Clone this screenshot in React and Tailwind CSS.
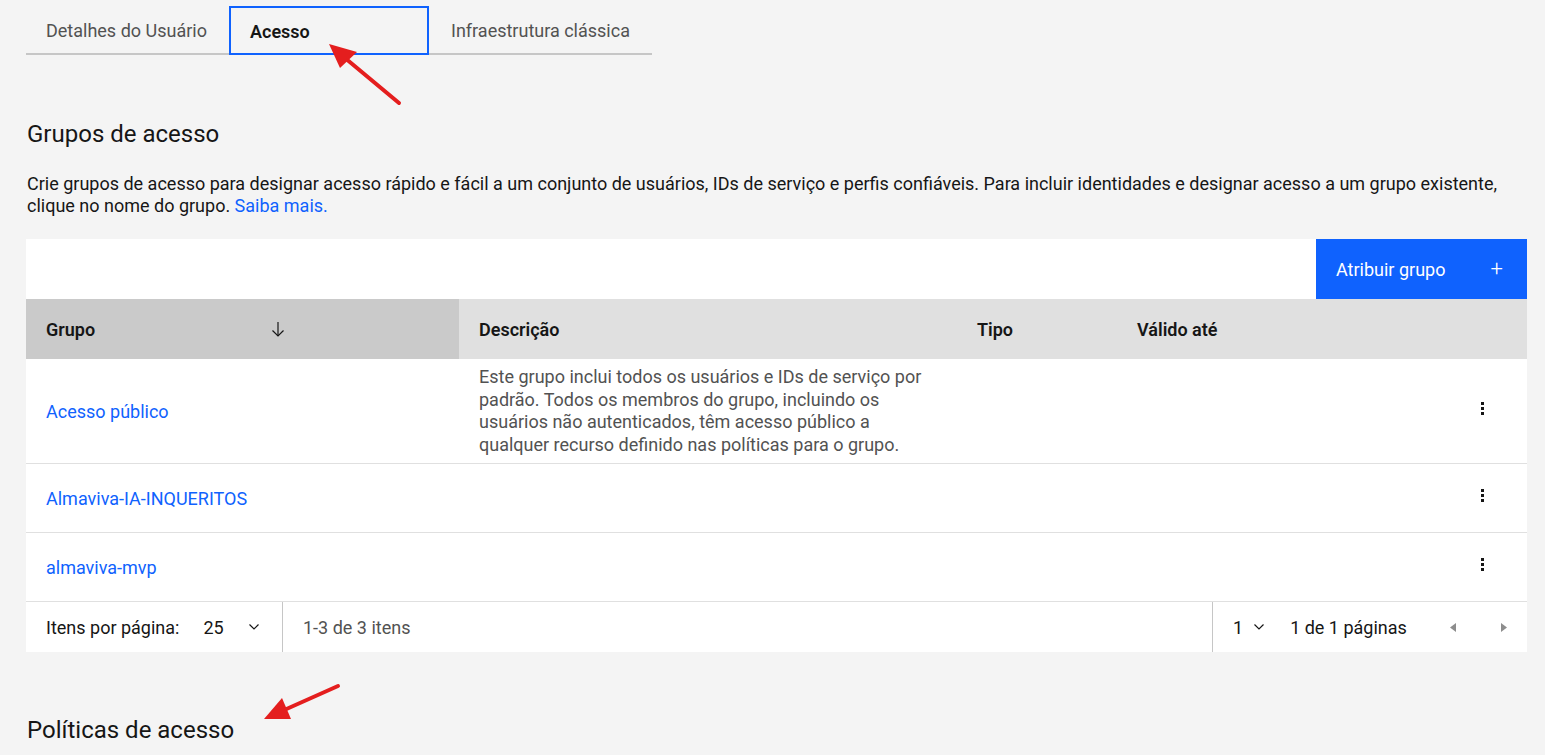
import React from "react";

const Chevron = () => (
  <svg width="12" height="8" viewBox="0 0 12 8" className="block">
    <polyline points="1.5,1.5 6,6 10.5,1.5" fill="none" stroke="#161616" strokeWidth="1.2" />
  </svg>
);

const Dots = () => (
  <div className="flex flex-col gap-[2px]">
    <span className="block w-[3px] h-[3px] bg-[#161616]" />
    <span className="block w-[3px] h-[3px] bg-[#161616]" />
    <span className="block w-[3px] h-[3px] bg-[#161616]" />
  </div>
);

const rows = [
  {
    name: "Acesso público",
    desc: [
      "Este grupo inclui todos os usuários e IDs de serviço por",
      "padrão. Todos os membros do grupo, incluindo os",
      "usuários não autenticados, têm acesso público a",
      "qualquer recurso definido nas políticas para o grupo.",
    ],
  },
  { name: "Almaviva-IA-INQUERITOS", desc: [] },
  { name: "almaviva-mvp", desc: [] },
];

export default function App() {
  return (
    <div
      className="relative min-h-[755px] bg-[#f4f4f4] text-[#161616] px-[26px] overflow-hidden text-[18px]"
      style={{ fontFamily: "Roboto, 'Noto Sans', sans-serif" }}
    >
      {/* Tabs */}
      <div className="flex pt-[6px]">
        <div className="w-[203px] h-[49px] border-b-2 border-[#c6c6c6] flex items-center pl-[20px] pt-[2px] text-[#525252]">
          Detalhes do Usuário
        </div>
        <div className="w-[200px] h-[49px] border-2 border-[#0f62fe] flex items-center pl-[19px] pt-[2px] font-semibold text-[#161616]">
          Acesso
        </div>
        <div className="w-[223px] h-[49px] border-b-2 border-[#c6c6c6] flex items-center pl-[22px] pt-[2px] text-[#525252]">
          Infraestrutura clássica
        </div>
      </div>

      {/* Section heading */}
      <h2 className="mt-[63px] text-[24px] leading-[32px] font-normal pl-px">Grupos de acesso</h2>
      <p className="mt-[23px] leading-[22px] text-[#161616] pl-px">
        Crie grupos de acesso para designar acesso rápido e fácil a um conjunto de usuários, IDs de serviço e perfis confiáveis. Para incluir identidades e designar acesso a um grupo existente,
        <br />
        clique no nome do grupo. <span className="text-[#0f62fe]">Saiba mais.</span>
      </p>

      {/* Table */}
      <div className="mt-[22px] w-[1501px] bg-white">
        {/* Toolbar */}
        <div className="h-[60px] flex justify-end">
          <div className="w-[211px] h-[60px] bg-[#0f62fe] text-white flex items-center justify-between pl-[20px] pr-[24px]">
            <span>Atribuir grupo</span>
            <span className="text-[22px] font-light leading-none">+</span>
          </div>
        </div>

        {/* Header */}
        <div className="grid grid-cols-[433px_498px_160px_1fr_64px] h-[60px] bg-[#e0e0e0] font-semibold">
          <div className="bg-[#cacaca] flex items-center justify-between pl-[20px] pr-[173px]">
            <span>Grupo</span>
            <svg width="16" height="16" viewBox="0 0 16 16" className="block">
              <line x1="8" y1="1" x2="8" y2="15" stroke="#161616" strokeWidth="1.2" />
              <polyline points="2.5,9.5 8,15 13.5,9.5" fill="none" stroke="#161616" strokeWidth="1.2" />
            </svg>
          </div>
          <div className="flex items-center pl-[20px]">Descrição</div>
          <div className="flex items-center pl-[20px]">Tipo</div>
          <div className="flex items-center pl-[20px]">Válido até</div>
          <div />
        </div>

        {/* Rows */}
        {rows.map((r, i) => (
          <div
            key={i}
            className={`grid grid-cols-[433px_498px_160px_1fr_64px] border-b border-[#e0e0e0] ${
              r.desc.length ? "min-h-[105px]" : "h-[69px]"
            }`}
          >
            <div className="flex items-center pl-[20px] text-[#0f62fe]">{r.name}</div>
            <div className="flex flex-col justify-center pl-[20px] leading-[22.5px] text-[#525252]">
              {r.desc.map((l, j) => (
                <span key={j} className="block whitespace-nowrap">{l}</span>
              ))}
            </div>
            <div />
            <div />
            <div className="flex items-center pl-[18px] pb-[5px]">
              <Dots />
            </div>
          </div>
        ))}

        {/* Pagination */}
        <div className="h-[50px] flex items-stretch">
          <div className="w-[257px] flex items-center pl-[20px] border-r border-[#c6c6c6]">
            <span className="text-[#161616]">Itens por página:</span>
            <span className="ml-[24px]">25</span>
            <span className="ml-[24px]"><Chevron /></span>
          </div>
          <div className="flex-1 flex items-center pl-[20px] text-[#525252]">1-3 de 3 itens</div>
          <div className="w-[315px] flex items-center border-l border-[#c6c6c6] pl-[20px]">
            <span>1</span>
            <span className="ml-[10px]"><Chevron /></span>
            <span className="ml-[25px]">1 de 1 páginas</span>
            <svg width="6" height="9" viewBox="0 0 6 9" className="block ml-[43px]">
              <polygon points="6,0 0,4.5 6,9" fill="#8d8d8d" />
            </svg>
            <svg width="6" height="9" viewBox="0 0 6 9" className="block ml-[45px]">
              <polygon points="0,0 6,4.5 0,9" fill="#8d8d8d" />
            </svg>
          </div>
        </div>
      </div>

      <h2 className="mt-[62px] text-[24px] leading-[32px] font-normal pl-px">Políticas de acesso</h2>

      {/* Annotation arrows */}
      <svg className="absolute inset-0 pointer-events-none" width="1545" height="755" viewBox="0 0 1545 755">
        <line x1="399" y1="103" x2="345" y2="58" stroke="#e41e1e" strokeWidth="4" strokeLinecap="round" />
        <polygon points="329,44 357,52 340,68" fill="#e41e1e" />
        <line x1="338" y1="686" x2="282" y2="711" stroke="#e41e1e" strokeWidth="4" strokeLinecap="round" />
        <polygon points="264,719 282,698 291,719" fill="#e41e1e" />
      </svg>
    </div>
  );
}
